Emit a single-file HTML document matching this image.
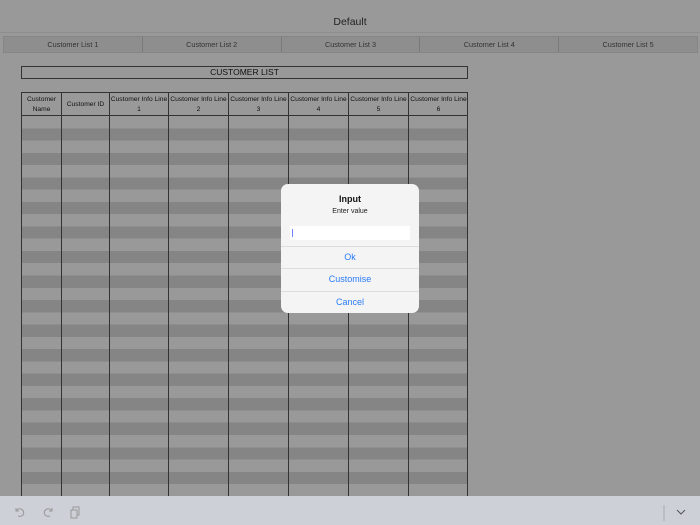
<!DOCTYPE html>
<html><head><style>
*{margin:0;padding:0;box-sizing:border-box}
body{width:700px;height:525px;overflow:hidden;background:#999;font-family:"Liberation Sans",sans-serif;position:relative}
.title{position:absolute;top:16px;left:0;width:700px;text-align:center;font-size:10.5px;color:#222}
.topline{position:absolute;top:32px;left:0;width:700px;height:1px;background:#8e8e8e}
.tabs{position:absolute;top:36px;left:3px;width:695px;height:17px;display:flex;border:1px solid #858585;background:#8e8e8e}
.tabs div{flex:1;text-align:center;font-size:7.3px;line-height:15px;color:#333;border-left:1px solid #7a7a7a}
.tabs div:first-child{border-left:none}
.cl{position:absolute;left:21px;top:66px;width:447px;height:13px;border:1px solid #333;text-align:center;font-size:8.5px;line-height:11px;color:#111}
.tbl{position:absolute;left:21px;top:92px;width:447px;height:404px;border:1px solid #333;border-bottom:none;
background:repeating-linear-gradient(#999 0,#999 12.27px,#858585 12.27px,#858585 24.54px);background-position:0 23px}
.hdr{position:absolute;left:0;top:0;width:100%;height:23px;background:#999;border-bottom:1px solid #333}
.v{position:absolute;top:0;bottom:0;width:1px;background:#333}
.h{position:absolute;top:0;height:23px;font-size:6.7px;color:#111;text-align:center;display:flex;align-items:center;justify-content:center;line-height:10px;white-space:nowrap}
.dlg{position:absolute;left:281px;top:184px;width:138px;height:129px;background:#f4f4f4;border-radius:7px;overflow:hidden}
.dlg .t{position:absolute;top:10px;width:100%;text-align:center;font-size:9px;font-weight:bold;color:#111}
.dlg .s{position:absolute;top:24px;width:100%;text-align:center;font-size:7px;color:#222}
.inp{position:absolute;left:9px;top:42px;width:120px;height:14px;background:#fff}
.inp i{position:absolute;left:2px;top:3px;width:1px;height:8px;background:#6b82ff}
.b{position:absolute;left:0;width:100%;height:22px;border-top:1px solid #ddd;text-align:center;font-size:9px;color:#2a7bf6;line-height:21px}
.bar{position:absolute;left:0;top:496px;width:700px;height:29px;background:#cdd0d7}
</style></head><body>
<div class="title">Default</div>
<div class="topline"></div>
<div class="tabs"><div>Customer List 1</div><div>Customer List 2</div><div>Customer List 3</div><div>Customer List 4</div><div>Customer List 5</div></div>
<div class="cl">CUSTOMER LIST</div>
<div class="tbl">
<div class="hdr"></div>
<div class="v" style="left:39px"></div><div class="v" style="left:87px"></div><div class="v" style="left:146px"></div><div class="v" style="left:206px"></div><div class="v" style="left:266px"></div><div class="v" style="left:326px"></div><div class="v" style="left:386px"></div>
<div class="h" style="left:0;width:39px">Customer<br>Name</div>
<div class="h" style="left:40px;width:47px">Customer ID</div>
<div class="h" style="left:88px;width:58px">Customer Info Line<br>1</div>
<div class="h" style="left:147px;width:59px">Customer Info Line<br>2</div>
<div class="h" style="left:207px;width:59px">Customer Info Line<br>3</div>
<div class="h" style="left:267px;width:59px">Customer Info Line<br>4</div>
<div class="h" style="left:327px;width:59px">Customer Info Line<br>5</div>
<div class="h" style="left:387px;width:59px">Customer Info Line<br>6</div>
</div>
<div class="dlg">
<div class="t">Input</div><div class="s">Enter value</div>
<div class="inp"><i></i></div>
<div class="b" style="top:62px">Ok</div>
<div class="b" style="top:84px">Customise</div>
<div class="b" style="top:107px">Cancel</div>
</div>
<div class="bar">
<svg width="700" height="29" style="position:absolute;left:0;top:0" fill="none" stroke="#999" stroke-width="1">
<path d="M16 12 L16 15 L19 15 M16 15 Q18 12 21 13 Q25 15 23 19 Q21 21 18 20"/>
<path d="M52 12 L52 15 L49 15 M52 15 Q50 12 47 13 Q43 15 45 19 Q47 21 50 20"/>
<rect x="71" y="14" width="6" height="8"/><path d="M73 14 V11 H79 V19 H77"/>
<path d="M664 9 V25" stroke="#aaa"/>
<path d="M677 14 L681 18 L685 14" stroke="#555"/>
</svg>
</div>
</body></html>
